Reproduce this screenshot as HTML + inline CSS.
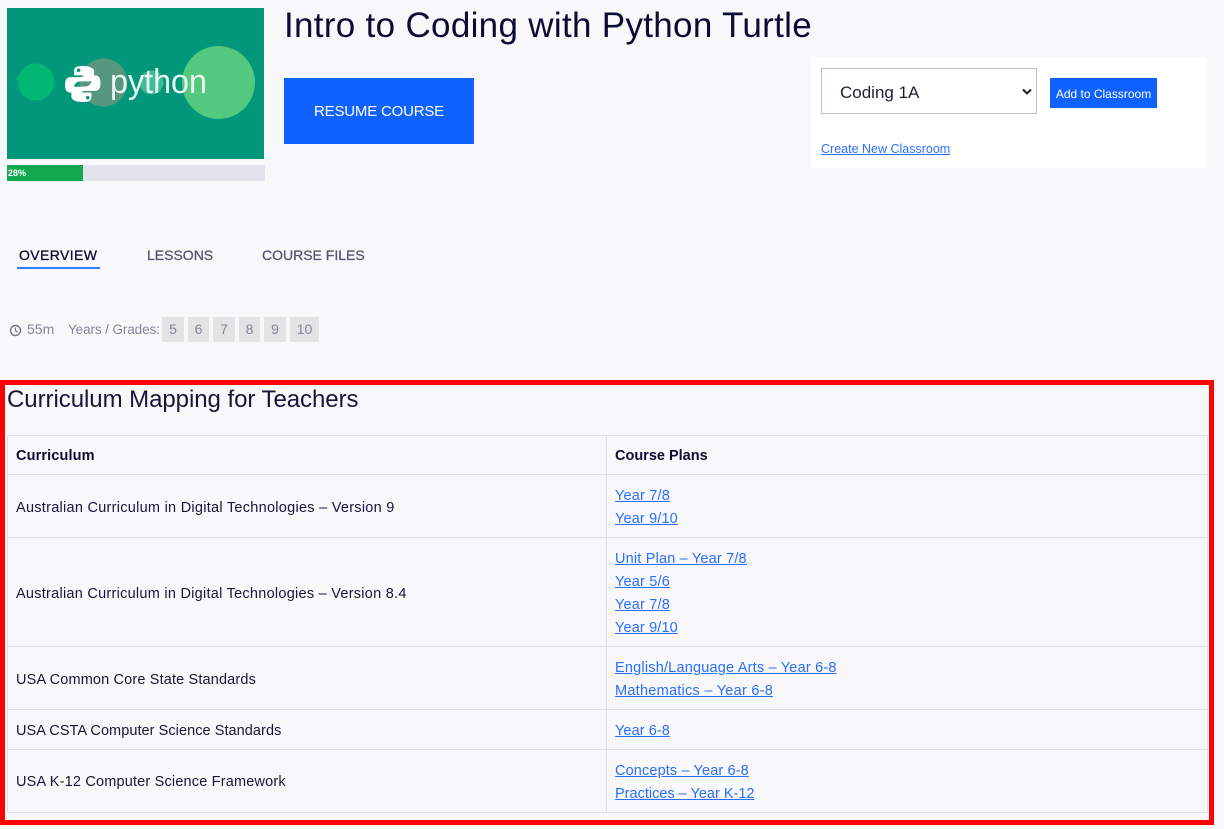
<!DOCTYPE html>
<html><head><meta charset="utf-8">
<style>
html,body{margin:0;padding:0;background:#f8f8fb;width:1224px;height:829px;overflow:hidden}
body{font-family:"Liberation Sans","Noto Sans CJK SC",sans-serif;color:#0b0b33;position:relative}
.a{position:absolute;white-space:nowrap}
.l{position:absolute;white-space:nowrap;font-size:14.5px;line-height:20px;color:#2a6ffb;text-decoration:underline;left:615px;letter-spacing:.15px;margin-top:2px}
.t{position:absolute;white-space:nowrap;font-size:14.5px;line-height:20px;left:16px;color:#16163a;margin-top:2px}
.h{background:#dfe0e4;position:absolute}
.g{position:absolute;top:317px;height:25px;background:#e3e3e3;color:#85859a;font-size:14px;line-height:25px;text-align:center}
.tab{position:absolute;white-space:nowrap;top:245px;font-size:14px;line-height:20px;color:#55556e;-webkit-text-stroke:.3px currentColor}
</style></head><body>
<svg class="a" style="left:7px;top:8px" width="257" height="151" viewBox="0 0 257 151">
<rect width="257" height="151" fill="#02967b"/>
<circle cx="96.500" cy="74.500" r="24" fill="#57967f"/>
<circle cx="211.500" cy="74.500" r="36.500" fill="#53c87f"/>
<circle cx="29" cy="74" r="18.500" fill="#00b873"/>
<path d="M8 69l5-1-1 7z" fill="#00b873"/>
<circle cx="144.500" cy="74.500" r="12" fill="#3fbb9c"/>
<g transform="translate(75.75 76) scale(.91 .86) translate(-75.5 -79)">
<path d="M75 58c-8 0-9 3-9 6v5h10v2H62c-4 0-6 3-6 9s2 9 6 9h4v-6c0-4 3-7 7-7h9c3 0 6-2 6-5v-7c0-3-4-6-13-6z" fill="#fff"/>
<path d="M76 100c8 0 9-3 9-6v-5H75v-2h14c4 0 6-3 6-9s-2-9-6-9h-4v6c0 4-3 7-7 7h-9c-3 0-6 2-6 5v7c0 3 4 6 13 6z" fill="#fff"/>
<circle cx="71" cy="63" r="2" fill="#02967b"/><circle cx="81" cy="95" r="2" fill="#02967b"/>
</g>
<text x="103" y="85" font-family="Liberation Sans,sans-serif" font-size="34" fill="#e9f5ef" textLength="97" lengthAdjust="spacingAndGlyphs">python</text>
</svg>
<div class="a" style="left:7px;top:165px;width:258px;height:16px;background:#e2e3ec"></div>
<div class="a" style="left:7px;top:165px;width:76px;height:16px;background:#12a84f;color:#fff;font-size:9px;font-weight:bold;line-height:16px;text-indent:1px">28%</div>
<div class="a" style="left:284px;top:3px;font-size:35px;line-height:46px;letter-spacing:.31px">Intro to Coding with Python Turtle</div>
<div class="a" style="left:284px;top:78px;width:190px;height:66px;background:#0f62fe;color:#fff;font-size:15px;letter-spacing:-.2px;line-height:68px;text-align:center">RESUME COURSE</div>
<div class="a" style="left:811px;top:58px;width:396px;height:110px;background:#fff"></div>
<div class="a" style="left:821px;top:68px;width:214px;height:44px;border:1px solid #b9bedb;background:#fff;color:#1e1e33;font-size:17px;line-height:47px;text-indent:18px">Coding 1A</div>
<svg class="a" style="left:1021px;top:87px" width="12" height="10" viewBox="0 0 12 10"><path d="M2 2.500l4 4 4-4" fill="none" stroke="#222" stroke-width="2"/></svg>
<div class="a" style="left:1050px;top:78px;width:107px;height:30px;background:#0f62fe;color:#fff;font-size:12px;line-height:32px;text-align:center">Add to Classroom</div>
<div class="a" style="left:821px;top:141px;font-size:12.5px;line-height:17px;color:#2a6ffb;text-decoration:underline">Create New Classroom</div>
<div class="tab" style="left:19px;color:#0b0b33;letter-spacing:.4px">OVERVIEW</div>
<div class="a" style="left:17px;top:267px;width:83px;height:2px;background:#2f7bff"></div>
<div class="tab" style="left:147px">LESSONS</div>
<div class="tab" style="left:262px">COURSE FILES</div>
<svg class="a" style="left:9px;top:324px" width="13" height="13" viewBox="0 0 13 13"><circle cx="6.500" cy="6.500" r="5" fill="none" stroke="#77778c" stroke-width="1.400"/><path d="M6.500 3.500v3.300l2.200 1.200" fill="none" stroke="#77778c" stroke-width="1.200"/></svg>
<div class="a" style="left:27px;top:319px;font-size:14px;line-height:20px;color:#85859a">55m</div>
<div class="a" style="left:68px;top:320px;font-size:13.500px;letter-spacing:-.1px;line-height:20px;color:#85859a">Years / Grades:</div>
<div class="g" style="left:162px;width:22px">5</div>
<div class="g" style="left:188px;width:21px">6</div>
<div class="g" style="left:213px;width:22px">7</div>
<div class="g" style="left:239px;width:21px">8</div>
<div class="g" style="left:264px;width:22px">9</div>
<div class="g" style="left:290px;width:29px">10</div>
<div class="a" style="left:7px;top:385px;font-size:24px;letter-spacing:-.05px;line-height:30px;color:#16163a">Curriculum Mapping for Teachers</div>
<div class="h" style="left:7px;top:435px;width:1201px;height:1px"></div>
<div class="h" style="left:7px;top:474px;width:1201px;height:1px"></div>
<div class="h" style="left:7px;top:537px;width:1201px;height:1px"></div>
<div class="h" style="left:7px;top:646px;width:1201px;height:1px"></div>
<div class="h" style="left:7px;top:709px;width:1201px;height:1px"></div>
<div class="h" style="left:7px;top:749px;width:1201px;height:1px"></div>
<div class="h" style="left:7px;top:812px;width:1201px;height:1px"></div>
<div class="h" style="left:7px;top:435px;width:1px;height:378px"></div>
<div class="h" style="left:606px;top:435px;width:1px;height:378px"></div>
<div class="h" style="left:1207px;top:435px;width:1px;height:378px"></div>
<div class="t" style="top:444px;font-weight:bold;color:#0b0b33;letter-spacing:.13px">Curriculum</div>
<div class="t" style="left:615px;top:444px;font-weight:bold;color:#0b0b33">Course Plans</div>
<div class="t" style="top:496px;letter-spacing:.27px">Australian Curriculum in Digital Technologies – Version 9</div>
<div class="t" style="top:582px;letter-spacing:.26px">Australian Curriculum in Digital Technologies – Version 8.4</div>
<div class="t" style="top:668px;letter-spacing:.15px">USA Common Core State Standards</div>
<div class="t" style="top:719px;letter-spacing:.06px">USA CSTA Computer Science Standards</div>
<div class="t" style="top:770px;letter-spacing:.18px">USA K-12 Computer Science Framework</div>
<div class="l" style="top:484px;letter-spacing:.19px">Year 7/8</div>
<div class="l" style="top:507px">Year 9/10</div>
<div class="l" style="top:547px;letter-spacing:.18px">Unit Plan – Year 7/8</div>
<div class="l" style="top:570px;letter-spacing:.19px">Year 5/6</div>
<div class="l" style="top:593px;letter-spacing:.19px">Year 7/8</div>
<div class="l" style="top:616px">Year 9/10</div>
<div class="l" style="top:656px;letter-spacing:.2px">English/Language Arts – Year 6-8</div>
<div class="l" style="top:679px;letter-spacing:.26px">Mathematics – Year 6-8</div>
<div class="l" style="top:719px;letter-spacing:.08px">Year 6-8</div>
<div class="l" style="top:759px;letter-spacing:.13px">Concepts – Year 6-8</div>
<div class="l" style="top:782px;letter-spacing:0">Practices – Year K-12</div>
<div class="a" style="left:0;top:380px;width:1204px;height:435px;border:5px solid #f00"></div>
</body></html>
